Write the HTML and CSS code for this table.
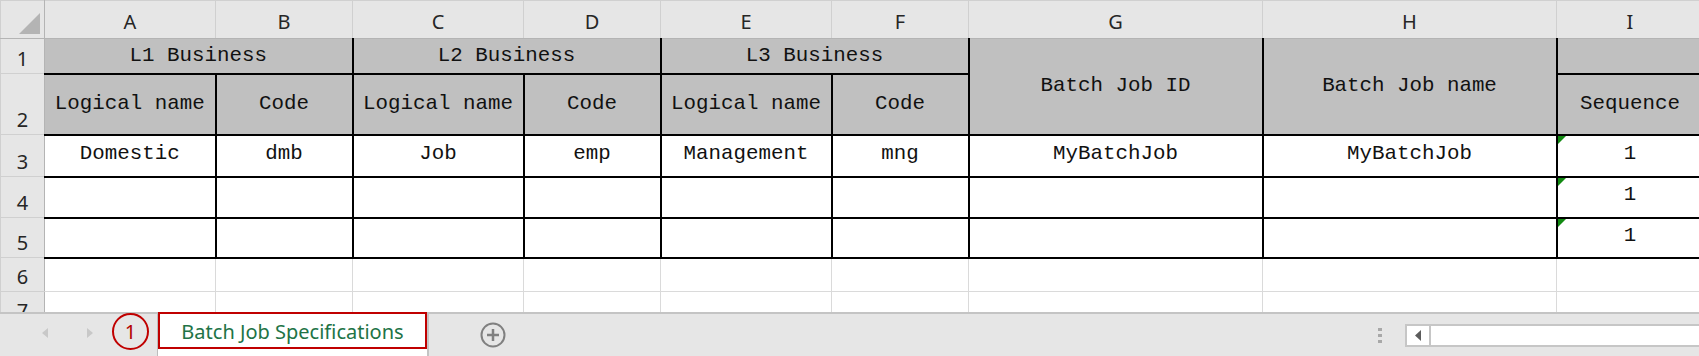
FILE: index.html
```html
<!DOCTYPE html>
<html lang="en">
<head>
    <meta charset="UTF-8">
    <meta name="viewport" content="width=device-width, initial-scale=1.0">
    <title>Batch Job Specifications</title>
    <link rel="stylesheet" href="styles.css">
</head>
<body>

    <!-- Worksheet grid -->
    <div class="sheet">
        <table class="grid">
            <colgroup>
                <col class="w-rowhead">
                <col class="w-name"><col class="w-code">
                <col class="w-name"><col class="w-code">
                <col class="w-name"><col class="w-code">
                <col class="w-wide"><col class="w-wide">
                <col class="w-seq">
            </colgroup>
            <thead>
                <tr class="r-heads">
                    <th class="corner">
                        <svg width="22" height="22" viewBox="0 0 22 22"><path d="M21 0 L21 21 L0 21 Z" fill="#b4b4b4"/></svg>
                    </th>
                    <th>A</th><th>B</th><th>C</th><th>D</th><th>E</th>
                    <th>F</th><th>G</th><th>H</th><th>I</th>
                </tr>
            </thead>
            <tbody>
                <tr class="r1">
                    <th class="row-head">1</th>
                    <td class="head b" colspan="2">L1 Business</td>
                    <td class="head b" colspan="2">L2 Business</td>
                    <td class="head b" colspan="2">L3 Business</td>
                    <td class="head b" rowspan="2">Batch Job ID</td>
                    <td class="head b" rowspan="2">Batch Job name</td>
                    <td class="head b"></td>
                </tr>
                <tr class="r2">
                    <th class="row-head">2</th>
                    <td class="head b">Logical name</td>
                    <td class="head b">Code</td>
                    <td class="head b">Logical name</td>
                    <td class="head b">Code</td>
                    <td class="head b">Logical name</td>
                    <td class="head b">Code</td>
                    <td class="head b">Sequence</td>
                </tr>
                <tr class="r3">
                    <th class="row-head">3</th>
                    <td class="b">Domestic</td>
                    <td class="b">dmb</td>
                    <td class="b">Job</td>
                    <td class="b">emp</td>
                    <td class="b">Management</td>
                    <td class="b">mng</td>
                    <td class="b">MyBatchJob</td>
                    <td class="b">MyBatchJob</td>
                    <td class="b flag">1</td>
                </tr>
                <tr class="r4">
                    <th class="row-head">4</th>
                    <td class="b"></td><td class="b"></td><td class="b"></td><td class="b"></td>
                    <td class="b"></td><td class="b"></td><td class="b"></td><td class="b"></td>
                    <td class="b flag">1</td>
                </tr>
                <tr class="r5">
                    <th class="row-head">5</th>
                    <td class="b"></td><td class="b"></td><td class="b"></td><td class="b"></td>
                    <td class="b"></td><td class="b"></td><td class="b"></td><td class="b"></td>
                    <td class="b flag">1</td>
                </tr>
                <tr class="r6">
                    <th class="row-head">6</th>
                    <td></td><td></td><td></td><td></td><td></td><td></td><td></td><td></td><td></td>
                </tr>
                <tr class="r7">
                    <th class="row-head">7</th>
                    <td></td><td></td><td></td><td></td><td></td><td></td><td></td><td></td><td></td>
                </tr>
            </tbody>
        </table>
    </div>

    <!-- Sheet tabs and horizontal scroll -->
    <div class="tabbar">
        <div class="nav">
            <svg width="6" height="10" viewBox="0 0 6 10"><path d="M6 0 L0 5 L6 10 Z" fill="#c8c8c8"/></svg>
            <svg width="6" height="10" viewBox="0 0 6 10"><path d="M0 0 L6 5 L0 10 Z" fill="#c8c8c8"/></svg>
        </div>
        <span class="callout">1</span>
        <div class="tab">
            <span class="tab-label">Batch Job Specifications</span>
        </div>
        <svg class="add-sheet" width="26" height="26" viewBox="0 0 26 26">
            <circle cx="13" cy="13" r="11.5" fill="none" stroke="#808080" stroke-width="2"/>
            <path d="M13 7 V19 M7 13 H19" stroke="#808080" stroke-width="2.5"/>
        </svg>
        <div class="spacer"></div>
        <div class="grip"><i></i><i></i><i></i></div>
        <div class="hscroll">
            <span class="hscroll-btn">
                <svg width="6" height="11" viewBox="0 0 6 11"><path d="M6 0 L0 5.5 L6 11 Z" fill="#5c5c5c"/></svg>
            </span>
            <span class="hscroll-track"></span>
        </div>
    </div>

</body>
</html>
```

FILE: styles.css
```css
/* Page */
body {
    margin: 0;
    overflow: hidden;
    background-color: #ffffff;
    font-family: "Noto Sans", "Liberation Sans", sans-serif;
}

/* Sheet area */
.sheet {
    height: 312px;
    overflow: hidden;
}

.grid {
    border-collapse: collapse;
    table-layout: fixed;
    width: 1703px;
}

.w-rowhead { width: 44px; }
.w-name { width: 171px; }
.w-code { width: 137px; }
.w-wide { width: 294px; }
.w-seq { width: 147px; }

.grid th,
.grid td {
    padding: 0;
    border: 1px solid #dadada;
}

/* Data cells */
.grid td {
    font-family: "Liberation Mono", "DejaVu Sans Mono", monospace;
    font-size: 20.8px;
    line-height: 24px;
    color: #111111;
    text-align: center;
    vertical-align: middle;
    padding-bottom: 4px;
}

.grid td.head {
    background-color: #c0c0c0;
    padding-bottom: 0;
}

/* Black cell borders */
.grid td.b {
    border-right: 2px solid #000000;
    border-bottom: 2px solid #000000;
}

/* Number stored as text marker */
.grid td.flag {
    position: relative;
}

.grid td.flag::before {
    content: "";
    position: absolute;
    left: 0;
    top: 0;
    border-top: 8px solid #128a12;
    border-right: 8px solid transparent;
}

/* Column headings */
.r-heads { height: 38px; }

.r-heads th {
    background-color: #e6e6e6;
    border-color: #d0d0d0;
    border-bottom: 1px solid #b4b4b4;
    font-weight: normal;
    font-size: 20px;
    line-height: 20px;
    color: #262626;
    padding-top: 4px;
    vertical-align: middle;
}

.r-heads th.corner {
    border-right-color: #b4b4b4;
    padding: 0;
    text-align: left;
    vertical-align: top;
}

.corner svg {
    display: block;
    margin: 12px 0 0 18px;
}

/* Row headings */
.grid th.row-head {
    background-color: #e6e6e6;
    border-color: #d0d0d0;
    border-right: 1px solid #b4b4b4;
    font-weight: normal;
    font-size: 20px;
    line-height: 20px;
    color: #262626;
    vertical-align: bottom;
    padding-bottom: 4px;
}

.r1 { height: 35px; }
.r2 { height: 61px; }
.r3 { height: 42px; }
.r4 { height: 41px; }
.r5 { height: 40px; }
.r6 { height: 34px; }
.r7 { height: 34px; }

/* Tab bar */
.tabbar {
    display: flex;
    width: 1705px;
    height: 44px;
    box-sizing: border-box;
    background-color: #e6e6e6;
    border-top: 2px solid #c4c4c4;
}

.nav {
    display: flex;
    align-items: center;
    gap: 39px;
    padding-left: 42px;
    padding-bottom: 4px;
}

.nav svg {
    display: block;
}

.callout {
    align-self: flex-start;
    margin-top: -1px;
    margin-left: 19px;
    width: 37px;
    height: 37px;
    box-sizing: border-box;
    border: 2px solid #c00000;
    border-radius: 50%;
    display: flex;
    align-items: center;
    justify-content: center;
    font-size: 20px;
    color: #b40000;
}

.tab {
    margin-left: 8px;
    margin-top: -2px;
    background-color: #ffffff;
    border-left: 1px solid #bdbdbd;
    border-right: 2px solid #c4c4c4;
}

.tab-label {
    display: block;
    width: 269px;
    height: 37px;
    box-sizing: border-box;
    border: 2px solid #c00000;
    padding-top: 4px;
    font-size: 20px;
    line-height: 27px;
    color: #217346;
    text-align: center;
}

.add-sheet {
    align-self: center;
    margin-left: 51px;
}

.spacer {
    flex: 1;
}

.grip {
    display: flex;
    flex-direction: column;
    justify-content: center;
    gap: 3px;
    width: 4px;
    margin-right: 23px;
}

.grip i {
    display: block;
    width: 4px;
    height: 3px;
    background-color: #a8a8a8;
}

.hscroll {
    align-self: center;
    display: flex;
    width: 300px;
    height: 23px;
    box-sizing: border-box;
    background-color: #ffffff;
    border: 2px solid #c6c6c6;
}

.hscroll-btn {
    width: 22px;
    display: flex;
    align-items: center;
    justify-content: center;
    border-right: 2px solid #c6c6c6;
}

.hscroll-track {
    flex: 1;
}
```
